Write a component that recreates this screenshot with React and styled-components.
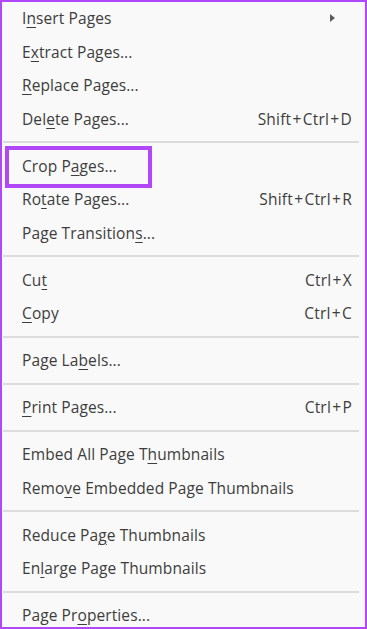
import React from "react";
import styled, { createGlobalStyle } from "styled-components";

const Global = createGlobalStyle`
  html, body { margin: 0; padding: 0; background: #f9f9f9; }
  * { box-sizing: border-box; }
`;

const Frame = styled.div`
  width: 367px;
  height: 629px;
  border: 2px solid #b247f7;
  background: #f9f9f9;
  overflow: hidden;
  font-family: "Open Sans", "Noto Sans", sans-serif;
  font-size: 15.5px;
  color: #3d3d3d;
`;

const Menu = styled.ul`
  list-style: none;
  margin: 0;
  padding: 0;
  display: flex;
  flex-direction: column;
`;

const Row = styled.li`
  position: relative;
  height: 33.5px;
  display: flex;
  align-items: center;
  justify-content: space-between;
  padding: 0 13px 1px 20px;
  white-space: nowrap;

  ${(p) =>
    p.$highlight &&
    `
    &::after {
      content: "";
      position: absolute;
      left: 3px;
      top: -4px;
      width: 139px;
      height: 34px;
      border: 4.5px solid #b247f7;
    }
  `}
`;

const Label = styled.span`
  letter-spacing: 0.1px;
`;

const Key = styled.span`
  text-decoration: underline;
  text-decoration-thickness: 1px;
  text-underline-offset: 3px;
`;

const Shortcut = styled.span`
  letter-spacing: 0.2px;
`;

const Plus = styled.span`
  margin: 0 1.2px;
`;

const Arrow = styled.span`
  width: 0;
  height: 0;
  margin-right: 17px;
  border-left: 5px solid #5c5c5c;
  border-top: 4px solid transparent;
  border-bottom: 4px solid transparent;
`;

const Separator = styled.li`
  height: 2px;
  margin: 5px 6px 6.5px 1px;
  background: #dcdcdc;
`;

const items = [
  { pre: "I", key: "n", post: "sert Pages", submenu: true },
  { pre: "E", key: "x", post: "tract Pages..." },
  { pre: "", key: "R", post: "eplace Pages..." },
  { pre: "Del", key: "e", post: "te Pages...", sc: "Shift+Ctrl+D" },
  "sep",
  { pre: "Crop P", key: "a", post: "ges...", hl: true },
  { pre: "Ro", key: "t", post: "ate Pages...", sc: "Shift+Ctrl+R" },
  { pre: "Page Transition", key: "s", post: "..." },
  "sep",
  { pre: "Cu", key: "t", post: "", sc: "Ctrl+X" },
  { pre: "", key: "C", post: "opy", sc: "Ctrl+C" },
  "sep",
  { pre: "Page La", key: "b", post: "els..." },
  "sep",
  { pre: "", key: "P", post: "rint Pages...", sc: "Ctrl+P" },
  "sep",
  { pre: "Embed All Page T", key: "h", post: "umbnails" },
  { pre: "Remo", key: "v", post: "e Embedded Page Thumbnails" },
  "sep",
  { pre: "Reduce Pa", key: "g", post: "e Thumbnails" },
  { pre: "En", key: "l", post: "arge Page Thumbnails" },
  "sep",
  { pre: "Page Pr", key: "o", post: "perties..." },
];

function renderShortcut(sc) {
  const parts = sc.split("+");
  return parts.map((p, i) => (
    <React.Fragment key={i}>
      {i > 0 && <Plus>+</Plus>}
      {p}
    </React.Fragment>
  ));
}

export default function App() {
  return (
    <>
      <Global />
      <Frame>
        <Menu>
          {items.map((it, i) =>
            it === "sep" ? (
              <Separator key={i} />
            ) : (
              <Row key={i} $highlight={it.hl}>
                <Label>
                  {it.pre}
                  <Key>{it.key}</Key>
                  {it.post}
                </Label>
                {it.sc && <Shortcut>{renderShortcut(it.sc)}</Shortcut>}
                {it.submenu && <Arrow />}
              </Row>
            )
          )}
        </Menu>
      </Frame>
    </>
  );
}
